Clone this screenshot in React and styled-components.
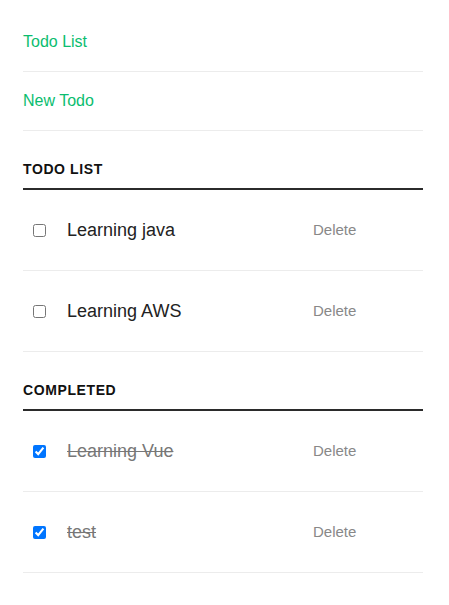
import React, { useState } from "react";
import styled, { createGlobalStyle } from "styled-components";

const Global = createGlobalStyle`
  html, body { margin: 0; padding: 0; background: #fff; }
  body { font-family: "Liberation Sans", Arial, sans-serif; color: #222; }
  * { box-sizing: border-box; }
`;

const Page = styled.div`
  width: 400px;
  margin: 0 0 0 23px;
  padding-top: 13px;
`;

const Nav = styled.ul`
  list-style: none;
  margin: 0;
  padding: 0;
`;

const NavItem = styled.li`
  border-bottom: 1px solid #ececec;
`;

const NavLink = styled.a`
  display: block;
  padding: 20px 0;
  font-size: 16px;
  line-height: 18px;
  color: #0bbd6f;
  text-decoration: none;
  cursor: pointer;
`;

const Section = styled.section``;

const Heading = styled.h2`
  margin: 30px 0 0;
  padding-bottom: 11px;
  font-size: 14px;
  line-height: 16px;
  font-weight: 700;
  letter-spacing: 0.6px;
  text-transform: uppercase;
  color: #111;
  border-bottom: 2px solid #2b2b2b;
`;

const Row = styled.div`
  display: grid;
  grid-template-columns: 44px 246px 1fr;
  align-items: center;
  padding: 30px 0;
  border-bottom: 1px solid #ececec;
`;

const Check = styled.input`
  width: 13px;
  height: 13px;
  margin: 0 0 0 10px;
`;

const Label = styled.span`
  font-size: 18px;
  line-height: 20px;
  color: ${(p) => (p.$done ? "#777" : "#222")};
  text-decoration: ${(p) => (p.$done ? "line-through" : "none")};
`;

const DeleteButton = styled.button`
  justify-self: start;
  border: none;
  background: none;
  padding: 0;
  font-family: inherit;
  font-size: 15px;
  line-height: 20px;
  color: #888;
  cursor: pointer;
`;

const initial = [
  { id: 1, text: "Learning java", done: false },
  { id: 2, text: "Learning AWS", done: false },
  { id: 3, text: "Learning Vue", done: true },
  { id: 4, text: "test", done: true },
];

function TodoRow({ todo, onToggle, onDelete }) {
  return (
    <Row>
      <Check type="checkbox" checked={todo.done} onChange={() => onToggle(todo.id)} />
      <Label $done={todo.done}>{todo.text}</Label>
      <DeleteButton onClick={() => onDelete(todo.id)}>Delete</DeleteButton>
    </Row>
  );
}

export default function App() {
  const [todos, setTodos] = useState(initial);
  const toggle = (id) =>
    setTodos((t) => t.map((x) => (x.id === id ? { ...x, done: !x.done } : x)));
  const remove = (id) => setTodos((t) => t.filter((x) => x.id !== id));

  return (
    <>
      <Global />
      <Page>
        <Nav>
          <NavItem><NavLink>Todo List</NavLink></NavItem>
          <NavItem><NavLink>New Todo</NavLink></NavItem>
        </Nav>
        <Section>
          <Heading>Todo List</Heading>
          {todos.filter((t) => !t.done).map((t) => (
            <TodoRow key={t.id} todo={t} onToggle={toggle} onDelete={remove} />
          ))}
        </Section>
        <Section>
          <Heading>Completed</Heading>
          {todos.filter((t) => t.done).map((t) => (
            <TodoRow key={t.id} todo={t} onToggle={toggle} onDelete={remove} />
          ))}
        </Section>
      </Page>
    </>
  );
}
